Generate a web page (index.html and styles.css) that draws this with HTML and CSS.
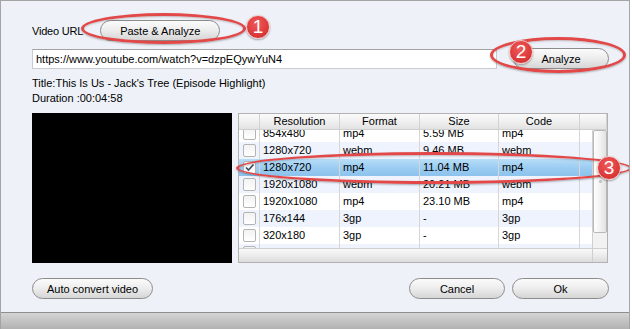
FILE: index.html
```html
<!DOCTYPE html>
<html lang="en">
<head>
    <meta charset="UTF-8">
    <title>Download Video</title>
    <link rel="stylesheet" href="styles.css">
</head>
<body>
    <div class="dialog">
        <div class="dialog-body">
            <div class="url-row">
                <span class="label">Video URL</span>
                <button class="btn btn-paste">Paste &amp; Analyze</button>
            </div>
            <div class="input-row">
                <div class="url-input">https://www.youtube.com/watch?v=dzpEQywYuN4</div>
                <button class="btn btn-analyze">Analyze</button>
            </div>
            <div class="info">
                <div>Title:This Is Us - Jack's Tree (Episode Highlight)</div>
                <div>Duration :00:04:58</div>
            </div>
            <div class="main">
                <div class="preview"></div>
                <div class="grid">
                    <div class="grid-head">
                        <div class="cell"></div>
                        <div class="cell">Resolution</div>
                        <div class="cell">Format</div>
                        <div class="cell">Size</div>
                        <div class="cell">Code</div>
                        <div class="cell"></div>
                    </div>
                    <div class="grid-body">
                        <div class="rows">
                            <div class="row"><div class="cell"><span class="check"></span></div><div class="cell">854x480</div><div class="cell">mp4</div><div class="cell">5.59 MB</div><div class="cell">mp4</div><div class="cell"></div></div>
                            <div class="row alt"><div class="cell"><span class="check"></span></div><div class="cell">1280x720</div><div class="cell">webm</div><div class="cell">9.46 MB</div><div class="cell">webm</div><div class="cell"></div></div>
                            <div class="row selected"><div class="cell"><span class="check checked"><svg width="11" height="11" viewBox="0 0 11 11"><path d="M2 5.5 L4.5 8 L9.5 2.5" fill="none" stroke="#3a4a66" stroke-width="1.6"/></svg></span></div><div class="cell">1280x720</div><div class="cell">mp4</div><div class="cell">11.04 MB</div><div class="cell">mp4</div><div class="cell"></div></div>
                            <div class="row alt"><div class="cell"><span class="check"></span></div><div class="cell">1920x1080</div><div class="cell">webm</div><div class="cell">20.21 MB</div><div class="cell">webm</div><div class="cell"></div></div>
                            <div class="row"><div class="cell"><span class="check"></span></div><div class="cell">1920x1080</div><div class="cell">mp4</div><div class="cell">23.10 MB</div><div class="cell">mp4</div><div class="cell"></div></div>
                            <div class="row alt"><div class="cell"><span class="check"></span></div><div class="cell">176x144</div><div class="cell">3gp</div><div class="cell">-</div><div class="cell">3gp</div><div class="cell"></div></div>
                            <div class="row"><div class="cell"><span class="check"></span></div><div class="cell">320x180</div><div class="cell">3gp</div><div class="cell">-</div><div class="cell">3gp</div><div class="cell"></div></div>
                            <div class="row alt"><div class="cell"><span class="check"></span></div><div class="cell"></div><div class="cell"></div><div class="cell"></div><div class="cell"></div><div class="cell"></div></div>
                        </div>
                        <div class="vscroll">
                            <div class="thumb"><span class="grip"></span></div>
                        </div>
                    </div>
                    <div class="hscroll">
                        <div class="corner"></div>
                    </div>
                </div>
            </div>
            <div class="footer">
                <button class="btn btn-auto">Auto convert video</button>
                <div class="footer-right">
                    <button class="btn btn-cancel">Cancel</button>
                    <button class="btn btn-ok">Ok</button>
                </div>
            </div>
        </div>
        <div class="status-bar"></div>

        <!-- callout marks drawn over the dialog -->
        <div class="mark mark-1"></div>
        <div class="mark mark-2"></div>
        <div class="mark mark-3"></div>
        <div class="badge badge-1">1</div>
        <div class="badge badge-2">2</div>
        <div class="badge badge-3">3</div>
    </div>
</body>
</html>
```

FILE: styles.css
```css
* {
    margin: 0;
    padding: 0;
    box-sizing: border-box;
}

body {
    font-family: "Liberation Sans", Arial, sans-serif;
    font-size: 11px;
    color: #000000;
    background: #ffffff;
}

.dialog {
    position: relative;
    width: 630px;
    height: 329px;
    background: #eef2f8;
    border-top: 1px solid #a4a4a4;
    border-left: 1px solid #a4a4a4;
    border-right: 1px solid #a4a4a4;
    display: flex;
    flex-direction: column;
    overflow: hidden;
}

.dialog-body {
    flex-grow: 1;
    padding: 19px 20px 0 31px;
}

.btn {
    font-family: inherit;
    font-size: 11px;
    color: #000000;
    height: 21px;
    border: 1px solid #8c8c8c;
    border-radius: 11px;
    background: linear-gradient(#fbfbfb, #ececec 50%, #d6d6d6);
    cursor: pointer;
}

.url-row {
    display: flex;
    align-items: center;
    height: 21px;
}

.label {
    letter-spacing: -0.2px;
}

.btn-paste {
    width: 120px;
    margin-left: 17px;
}

.input-row {
    display: flex;
    align-items: center;
    margin-top: 7px;
    height: 21px;
}

.url-input {
    width: 465px;
    height: 20px;
    background: #ffffff;
    border: 1px solid #c8ccd2;
    border-top-color: #a2a2a2;
    padding: 3px 3px 0;
    font-size: 11px;
}

.btn-analyze {
    width: 96px;
    margin-left: auto;
}

.info {
    margin-top: 7px;
    font-size: 11px;
    line-height: 15px;
}

.main {
    display: flex;
    gap: 6px;
    margin-top: 7px;
    height: 150px;
}

.preview {
    width: 200px;
    background: #000000;
}

.grid {
    width: 370px;
    border: 1px solid #b2b2b2;
    background: #ffffff;
    display: flex;
    flex-direction: column;
    font-size: 11px;
}

.grid-head,
.row {
    display: grid;
    grid-template-columns: 21px 80px 80px 79px 81px 1fr;
}

.grid-head {
    height: 16px;
    background: linear-gradient(#fafafa, #f0f0f0 50%, #e2e2e2);
    border-bottom: 1px solid #cfcfcf;
}

.grid-head .cell {
    text-align: center;
    border-right: 1px solid #d2d2d2;
    line-height: 15px;
}

.grid-body {
    flex-grow: 1;
    display: flex;
    overflow: hidden;
}

.rows {
    flex-grow: 1;
    margin-top: -5px;
}

.row {
    height: 17px;
    line-height: 17px;
    background: #ffffff;
}

.row.alt {
    background: #eef3fd;
}

.row.selected {
    background: linear-gradient(#b8def8, #9ccdf2 50%, #8cc2ec);
}

.row .cell {
    border-right: 1px solid #d6d6d6;
    padding-left: 3px;
    white-space: nowrap;
    overflow: hidden;
}

.row .cell:first-child {
    padding-left: 4px;
    display: flex;
    align-items: center;
}

.row .cell:last-child {
    border-right: none;
}

.check {
    width: 13px;
    height: 13px;
    border: 1px solid #b4b4b4;
    border-radius: 2px;
    background: linear-gradient(#f2f2f2, #ffffff);
    display: flex;
    align-items: center;
    justify-content: center;
}

.vscroll {
    width: 15px;
    background: #f2f2f2;
    border-left: 1px solid #d0d0d0;
}

.thumb {
    height: 103px;
    border: 1px solid #b8b8b8;
    border-radius: 2px;
    background: linear-gradient(90deg, #ffffff, #f0f0f0 60%, #e2e2e2);
    display: flex;
    align-items: center;
    justify-content: center;
}

.grip {
    width: 3px;
    height: 3px;
    background: #c4c4c4;
    border-radius: 1px;
}

.hscroll {
    height: 16px;
    border-top: 1px solid #cfcfcf;
    background: linear-gradient(#f9f9f9, #ececec 50%, #dcdcdc);
    display: flex;
    justify-content: flex-end;
}

.corner {
    width: 15px;
    border-left: 1px solid #cfcfcf;
}

.footer {
    display: flex;
    align-items: center;
    margin-top: 15px;
}

.btn-auto {
    width: 121px;
}

.footer-right {
    margin-left: auto;
    display: flex;
    gap: 7px;
}

.btn-cancel {
    width: 96px;
}

.btn-ok {
    width: 97px;
}

.status-bar {
    height: 17px;
    border-top: 1px solid #8e8e8e;
    background: linear-gradient(#d4d4d4, #c0c0c0 60%, #b2b2b2);
}

/* callouts */
.mark {
    position: absolute;
    border: 3px solid #e24848;
    border-radius: 50%;
    box-shadow: 0 1px 2px rgba(0, 0, 0, 0.3), inset 0 1px 2px rgba(0, 0, 0, 0.2);
}

.mark-1 {
    left: 80px;
    top: 12px;
    width: 165px;
    height: 31px;
}

.mark-2 {
    left: 489px;
    top: 36px;
    width: 136px;
    height: 36px;
}

.mark-3 {
    left: 235px;
    top: 151px;
    width: 396px;
    height: 32px;
}

.badge {
    position: absolute;
    width: 24px;
    height: 24px;
    border-radius: 50%;
    border: 1px solid #f4c8c8;
    background: radial-gradient(circle at 45% 35%, #f05a5a, #dd3a3a 60%, #c82828);
    box-shadow: 0 1px 2px rgba(0, 0, 0, 0.35);
    color: #ffffff;
    font-family: "Liberation Sans", Arial, sans-serif;
    font-size: 19px;
    line-height: 22px;
    text-align: center;
}

.badge-1 {
    left: 245px;
    top: 14px;
}

.badge-2 {
    left: 508px;
    top: 39px;
}

.badge-3 {
    left: 596px;
    top: 155px;
}
```
